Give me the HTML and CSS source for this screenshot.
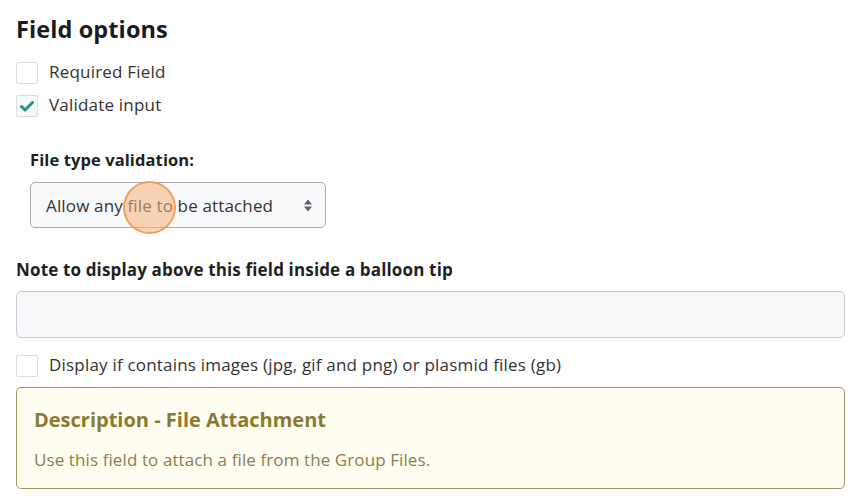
FILE: index.html
```html
<!DOCTYPE html>
<html lang="en">
<head>
    <meta charset="UTF-8">
    <meta name="viewport" content="width=device-width, initial-scale=1.0">
    <title>Field options</title>
    <link rel="stylesheet" href="styles.css">
</head>
<body>
    <div class="panel">
        <h2 class="title">Field options</h2>

        <label class="check-row">
            <span class="check-box"></span>
            <span class="check-label">Required Field</span>
        </label>
        <label class="check-row">
            <span class="check-box checked">
                <svg width="16" height="16" viewBox="0 0 16 16"><path d="M2.5 8.5 L6 12 L13.5 4.5" fill="none" stroke="#2b8f8c" stroke-width="3" stroke-linecap="round" stroke-linejoin="round"/></svg>
            </span>
            <span class="check-label">Validate input</span>
        </label>

        <div class="sub-group">
            <div class="field-label">File type validation:</div>
            <div class="select-box">
                <span>Allow any file to be attached</span>
                <svg class="select-arrows" width="10" height="15" viewBox="0 0 10 15"><path d="M1 6.5 L5 1.5 L9 6.5 Z M1 8.5 L5 13.5 L9 8.5 Z" fill="#5f6368"/></svg>
                <span class="cursor-ring"></span>
            </div>
        </div>

        <div class="field-label note-label">Note to display above this field inside a balloon tip</div>
        <div class="text-input"></div>

        <label class="check-row">
            <span class="check-box"></span>
            <span class="check-label">Display if contains images (jpg, gif and png) or plasmid files (gb)</span>
        </label>

        <div class="desc-box">
            <div class="desc-title">Description - File Attachment</div>
            <div class="desc-text">Use this field to attach a file from the Group Files.</div>
        </div>
    </div>
</body>
</html>
```

FILE: styles.css
```css
body {
    margin: 0;
    padding: 0;
    font-family: 'Open Sans', 'Noto Sans', sans-serif;
    background-color: #ffffff;
    color: #212529;
    overflow: hidden;
}

.panel {
    padding: 14px 15px 0 16px;
}

.title {
    margin: 0 0 18px 0;
    font-size: 23.5px;
    font-weight: 700;
    line-height: 30px;
    color: #1a1a1a;
    letter-spacing: 0.1px;
}

.check-row {
    display: flex;
    align-items: center;
    gap: 11px;
    height: 22px;
    margin-bottom: 11px;
}

.check-box {
    width: 20px;
    height: 20px;
    border: 1px solid #dcdcdc;
    border-radius: 2px;
    background-color: #fff;
    display: flex;
    align-items: center;
    justify-content: center;
    flex-shrink: 0;
}

.check-box.checked {
    background-color: #f3fbfb;
}

.check-label {
    font-size: 17px;
    line-height: 20px;
    color: #333;
    letter-spacing: 0.2px;
    margin-top: -2px;
}

.sub-group {
    padding: 21px 0 0 14px;
}

.field-label {
    font-size: 16.5px;
    font-weight: 700;
    color: #1f1f1f;
    line-height: 22px;
    letter-spacing: 0.1px;
}

.select-box {
    position: relative;
    margin-top: 11px;
    width: 296px;
    height: 46px;
    border: 1px solid #a9adb2;
    border-radius: 5px;
    background-color: #f8f9fa;
    display: flex;
    align-items: center;
    justify-content: space-between;
    padding: 0 12px 0 15px;
    box-sizing: border-box;
    font-size: 17px;
    color: #333;
    letter-spacing: 0.15px;
}

.select-arrows {
    flex-shrink: 0;
}

.cursor-ring {
    position: absolute;
    left: 92px;
    top: -2px;
    width: 53px;
    height: 53px;
    box-sizing: border-box;
    border-radius: 50%;
    border: 2px solid rgba(242, 150, 80, 0.85);
    background-color: rgba(248, 178, 120, 0.55);
}

.note-label {
    margin-top: 31px;
    font-size: 17px;
    letter-spacing: 0.15px;
}

.text-input {
    margin-top: 10px;
    height: 45px;
    border: 1px solid #c8ccd0;
    border-radius: 5px;
    background-color: #f8f9fa;
    margin-bottom: 17px;
}

.desc-box {
    margin-top: -1px;
    border: 1px solid #9e9660;
    border-radius: 5px;
    background-color: #fffdf2;
    padding: 19px 17px 17px 17px;
}

.desc-title {
    font-size: 20px;
    font-weight: 700;
    color: #8a7a2e;
    line-height: 26px;
}

.desc-text {
    margin-top: 16px;
    font-size: 17px;
    color: #8c7d4a;
    line-height: 22px;
    letter-spacing: 0.1px;
}
```
